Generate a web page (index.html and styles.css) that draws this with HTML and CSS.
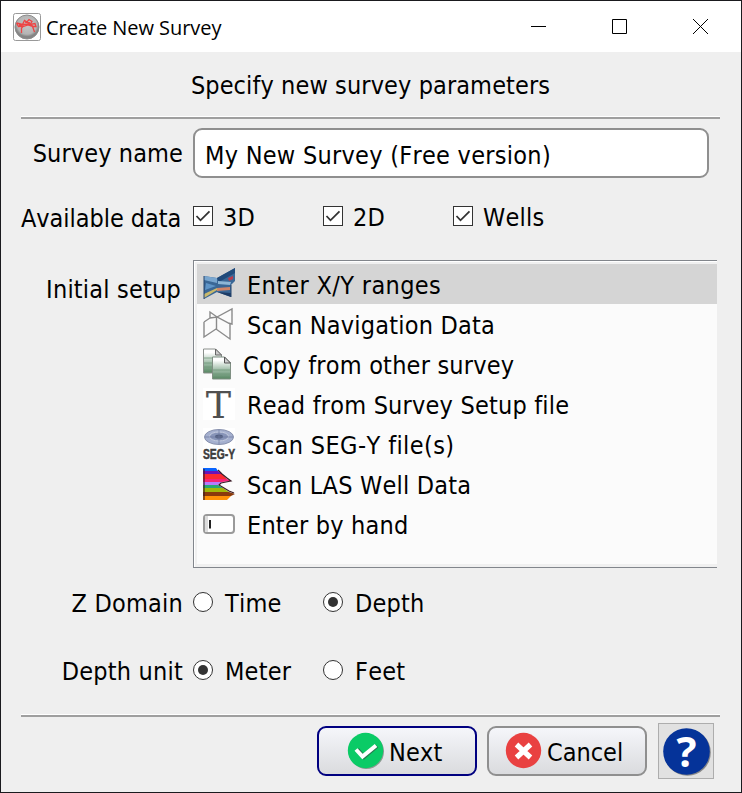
FILE: index.html
```html
<!DOCTYPE html>
<html lang="en">
<head>
<meta charset="utf-8">
<title>Create New Survey</title>
<link rel="stylesheet" href="styles.css">
</head>
<body>
<div class="window">
  <header class="titlebar">
    <svg class="app-icon" width="28" height="28" viewBox="0 0 28 28">
      <defs><radialGradient id="ball" cx=".5" cy=".4"><stop offset="0" stop-color="#c8c8c8"/><stop offset=".8" stop-color="#b4b4b4"/><stop offset="1" stop-color="#858585"/></radialGradient></defs>
      <rect x=".5" y=".5" width="27" height="27" rx="2" fill="#fff" stroke="#999"/>
      <circle cx="14" cy="14" r="12" fill="url(#ball)" stroke="#8c8c8c"/>
      <path d="M3.500 10l6 1.500 2-4 2.500 1.500 2-2.500 3 2-2 3 5-1 1 3-3.500 0 2 5.500M3.500 10l2 3.500 5-.5-2 2v5M6 12l9-1 5 2M9 14l6-2 6 2M12 9l5 1" fill="none" stroke="#ee4444" stroke-width="1.300"/>
    </svg>
    <span class="caption">Create New Survey</span>
    <div class="controls">
      <svg width="81" height="51" viewBox="0 0 81 51"><path d="M31 25.500h15"/></svg>
      <svg width="81" height="51" viewBox="0 0 81 51"><path d="M31.500 18.500h14v14h-14z"/></svg>
      <svg width="79" height="51" viewBox="0 0 79 51"><path d="M31 18l15 15M46 18l-15 15"/></svg>
    </div>
  </header>
  <main class="content">
    <h1 class="heading">Specify new survey parameters</h1>
    <div class="rule"></div>

    <div class="row name-row">
      <label class="label name-label" for="name">Survey name</label>
      <div class="name-field" id="name">My New Survey (Free version)</div>
    </div>

    <div class="row data-row">
      <span class="label data-label">Available data</span>
      <div class="options">
        <div class="option check"><svg width="20" height="20" viewBox="0 0 20 20"><rect x=".5" y=".5" width="19" height="19"/><path d="M3.500 10l4 4.300 9-9"/></svg><span>3D</span></div>
        <div class="option check"><svg width="20" height="20" viewBox="0 0 20 20"><rect x=".5" y=".5" width="19" height="19"/><path d="M3.500 10l4 4.300 9-9"/></svg><span>2D</span></div>
        <div class="option check"><svg width="20" height="20" viewBox="0 0 20 20"><rect x=".5" y=".5" width="19" height="19"/><path d="M3.500 10l4 4.300 9-9"/></svg><span>Wells</span></div>
      </div>
    </div>

    <div class="row setup-row">
      <span class="label setup-label">Initial setup</span>
      <ul class="list">
        <li class="item selected">
          <svg width="32" height="32" viewBox="0 0 32 32">
            <path d="M1 8l13 2L32 0v13l-4 4v12l-14-5L1 31z" fill="#3a6796"/>
            <path d="M1 8l13 2v5L1 12z" fill="#79a6cf"/><path d="M14 10L32 0v5L16 14z" fill="#204a7b"/>
            <path d="M3 15l10 3-11 4z" fill="#5f95c8"/><path d="M15 13l13 1-1 3-12-1z" fill="#8db6d6"/>
            <path d="M25 10l5-2v3l-4 2z" fill="#b83b4c"/><path d="M14 20l13-1v3l-13 1z" fill="#d08468"/>
            <path d="M1 26l13-6v2L1 30z" fill="#c9b96b"/><path d="M14 24l14 1v4z" fill="#1d3c66"/>
            <path d="M1 8v23M28 17v12" stroke="#24456c" fill="none"/>
          </svg><span>Enter X/Y ranges</span></li>
        <li class="item">
          <svg width="32" height="32" viewBox="0 0 32 32" fill="none" stroke="#8b8b8b" stroke-width="1.400">
            <path d="M1 14l6-4V4l7 5L29 1v15l-4-1M1 14v15l12-8 14 10V16L14 9 7 10M13.500 9v12"/>
          </svg><span>Scan Navigation Data</span></li>
        <li class="item copy">
          <svg width="32" height="32" viewBox="0 0 32 32">
            <defs><linearGradient id="page" x1="0" y1="0" x2="0" y2="1"><stop offset=".15" stop-color="#fff"/><stop offset=".6" stop-color="#9bbaa4"/><stop offset="1" stop-color="#568661"/></linearGradient></defs>
            <path d="M.5 1h12l6 6v18H.5z" fill="url(#page)" stroke="#8a8f8b"/><path d="M12.500 1v6h6z" fill="#ccc" stroke="#666"/>
            <path d="M9.500 9h12l6 6v16h-18z" fill="url(#page)" stroke="#7f8f83"/><path d="M21.500 9v6h6z" fill="#ccc" stroke="#555"/>
            <path d="M10 22h17M10 26h17M1 10h8M1 15h8M1 19h8" stroke="#6e9879" stroke-width=".8"/>
          </svg><span>Copy from other survey</span></li>
        <li class="item">
          <svg width="32" height="32" viewBox="0 0 32 32"><rect width="32" height="32" fill="#fff"/><text x="15.500" y="30" class="glyph-t">T</text></svg><span>Read from Survey Setup file</span></li>
        <li class="item">
          <svg width="32" height="32" viewBox="0 0 32 32"><rect width="32" height="32" fill="#fff"/>
            <ellipse cx="16" cy="9" rx="14.500" ry="7.500" fill="#a5b0cf" stroke="#8790ad"/>
            <ellipse cx="16" cy="8.500" rx="9.500" ry="4.500" fill="#8794b8" stroke="#c6cde0"/>
            <ellipse cx="16" cy="8.500" rx="4" ry="2" fill="#536082"/><path d="M2 9h28M16 2v14" stroke="#6d799f" stroke-width=".7"/>
            <text x="0" y="30.500" textLength="32" lengthAdjust="spacingAndGlyphs" class="glyph-segy">SEG-Y</text></svg><span class="wide">Scan SEG-Y file(s)</span></li>
        <li class="item">
          <svg width="32" height="32" viewBox="0 0 32 32">
            <path d="M0 0h13l2 3H0z" fill="#0864ff"/><path d="M0 3h15l4 3H0z" fill="#6b12b8"/><path d="M0 6h19l5 5H0z" fill="#fb2a32"/>
            <path d="M0 11h24l4 2-9 1H0z" fill="#f52378"/><path d="M0 14h19l-4 3H0z" fill="#b57cff"/><path d="M0 17h15l5 3H0z" fill="#27a875"/>
            <path d="M0 20h20l6 4H0z" fill="#a1b80a"/><path d="M0 24h26l6 2-4 2H0z" fill="#8a3a0c"/><path d="M0 28h28l-4 4H0z" fill="#ff9208"/>
            <path d="M1 1v31M15 2l4 4 5 4 4 3-10 2-2 2 10 6 5 2" fill="none" stroke="#3a1c26" stroke-width="1.200"/>
          </svg><span>Scan LAS Well Data</span></li>
        <li class="item">
          <svg width="32" height="32" viewBox="0 0 32 32"><rect x="1" y="7" width="30" height="18" rx="3" fill="#fff" stroke="#9a9a9a" stroke-width="2"/><path d="M3.500 8v16" stroke="#ddd" stroke-width="3"/><path d="M7 12v8.500" stroke="#222" stroke-width="2"/></svg><span>Enter by hand</span></li>
      </ul>
    </div>

    <div class="row radio-row">
      <span class="label">Z Domain</span>
      <div class="options">
        <div class="option radio"><svg width="20" height="20" viewBox="0 0 20 20"><circle cx="10" cy="10" r="9.500"/></svg><span>Time</span></div>
        <div class="option radio"><svg width="20" height="20" viewBox="0 0 20 20"><circle cx="10" cy="10" r="9.500"/><circle class="dot" cx="10" cy="10" r="5"/></svg><span>Depth</span></div>
      </div>
    </div>
    <div class="row radio-row unit-row">
      <span class="label">Depth unit</span>
      <div class="options">
        <div class="option radio"><svg width="20" height="20" viewBox="0 0 20 20"><circle cx="10" cy="10" r="9.500"/><circle class="dot" cx="10" cy="10" r="5"/></svg><span>Meter</span></div>
        <div class="option radio"><svg width="20" height="20" viewBox="0 0 20 20"><circle cx="10" cy="10" r="9.500"/></svg><span>Feet</span></div>
      </div>
    </div>

    <div class="rule"></div>
    <footer class="actions">
      <button class="button next"><svg width="38" height="38" viewBox="0 0 38 38"><circle cx="19.500" cy="19.500" r="17.500" fill="#8b9a91"/><circle cx="18.500" cy="18.500" r="17.700" fill="#0acb66"/><path d="M10.500 17.500l6.500 7.500L30 14" fill="none" stroke="#287a50" stroke-width="4"/><path d="M9 17.500l6.500 7L29 13.500" fill="none" stroke="#fff" stroke-width="4"/></svg><span>Next</span></button>
      <button class="button cancel"><svg width="38" height="38" viewBox="0 0 38 38"><circle cx="18.500" cy="18.500" r="17.700" fill="#e94141"/><path d="M11.500 12.500l14 13M25.500 12.500l-14 13" fill="none" stroke="#fff" stroke-width="5.200"/></svg><span>Cancel</span></button>
      <button class="help"><svg width="54" height="54" viewBox="0 0 54 54"><circle cx="28.500" cy="28.500" r="23.300" fill="#888"/><circle cx="27.500" cy="27.500" r="23.300" fill="#053399"/><text x="27.500" y="43" class="glyph-help">?</text></svg></button>
    </footer>
  </main>
</div>
</body>
</html>
```
FILE: styles.css
```css
* { box-sizing: border-box; }

body {
  margin: 0;
  font: 25px/30px "DejaVu Sans Condensed", "DejaVu Sans", sans-serif;
  font-kerning: none;
  letter-spacing: 0.2px;
  color: #000;
}

svg { display: block; flex: none; overflow: visible; }

.window {
  width: 742px;
  height: 793px;
  border: 1px solid #1a1a1e;
  background: #efefef;
  display: flex;
  flex-direction: column;
}

.titlebar {
  height: 51px;
  background: #fff;
  display: flex;
  align-items: center;
  padding-left: 12px;
}
.caption {
  margin-left: 5px;
  font: 20px/28px "Open Sans", sans-serif;
  letter-spacing: -0.05px;
  padding-top: 2px;
}
.controls { display: flex; margin-left: auto; }
.controls path { fill: none; stroke: #000; }

.content { padding: 0 21px 0 20px; }

.heading {
  margin: 0;
  height: 64px;
  padding-top: 19px;
  font-size: 25px;
  font-weight: normal;
  letter-spacing: 0.1px;
  text-align: center;
}

.rule {
  height: 3px;
  border-top: 1px solid #fff;
  background: #9f9f9f;
}

.row { display: flex; align-items: center; }
.label { width: 162px; flex: none; text-align: right; margin-right: 10px; white-space: nowrap; }

.name-row { margin-top: 9px; height: 50px; }
.name-label { letter-spacing: 0.1px; padding-top: 2px; }
.name-field {
  width: 516px;
  height: 50px;
  border: 2px solid #8f8f8f;
  border-radius: 9px;
  background: #fff;
  padding: 11px 10px 0;
  letter-spacing: 0.27px;
}

.data-row { margin-top: 18px; height: 40px; }
.data-label, .setup-label { width: 160px; margin-right: 12px; }
.data-label { padding-top: 6px; letter-spacing: -0.05px; }

.options { display: flex; }
.option { width: 130px; display: flex; align-items: center; }
.check span { padding: 4px 0 0 10px; margin-bottom: 0; }
.radio span { padding: 4px 0 0 12px; }
.check rect, .radio circle { fill: #fff; stroke: #333; }
.check path { fill: none; stroke: #333; stroke-width: 1.8; }
.radio .dot { fill: #333; stroke: none; }

.setup-row { margin-top: 24px; align-items: flex-start; }
.setup-label { padding-top: 15px; }
.list {
  list-style: none;
  margin: 0;
  width: 524px;
  height: 308px;
  padding: 3px 0 3px 3px;
  border: 1px solid #82868c;
  border-right: 0;
  background: #fbfbfb;
  box-shadow: inset 1px 1px #fff, inset 3px 3px #f0f0f0, inset 0 -3px #f0f0f0;
}
.item { height: 40px; display: flex; align-items: center; padding-left: 6px; }
.item span { padding: 4px 0 0 12px; white-space: nowrap; }
.item.copy span { padding-left: 8px; }
.item .wide { letter-spacing: 0.4px; }
.selected { background: #d5d5d5; }
.selected span { letter-spacing: 0.35px; }
.glyph-t { font: 38px "DejaVu Serif", serif; text-anchor: middle; fill: #505050; }
.glyph-segy { font: bold 14px "Liberation Sans", sans-serif; letter-spacing: 0; fill: #3c3c3c; stroke: #3c3c3c; stroke-width: 0.5; }

.radio-row { margin-top: 14px; height: 40px; }
.unit-row { margin: 28px 0 24px; }
.radio-row .label { padding-top: 4px; }

.actions { display: flex; align-items: center; margin-top: 6px; padding-left: 296px; }
button { font: inherit; letter-spacing: inherit; color: inherit; }
.button {
  width: 160px;
  height: 50px;
  margin-right: 10px;
  display: flex;
  align-items: center;
  border: 2px solid #8f8f8f;
  border-radius: 9px;
  background: linear-gradient(#f5f6fa, #dadbde);
}
.button span { padding: 4px 0 0 4px; }
.next { padding: 0 0 0 28px; border-color: #000080; }
.cancel { padding: 0 0 0 16px; letter-spacing: 0; }
.help {
  width: 56px;
  height: 56px;
  margin-left: 1px;
  padding: 0;
  border: 1px solid #adadad;
  background: #e1e1e1;
}
.glyph-help { font: bold 42px "Open Sans", sans-serif; letter-spacing: 0; text-anchor: middle; fill: #fff; }
```
